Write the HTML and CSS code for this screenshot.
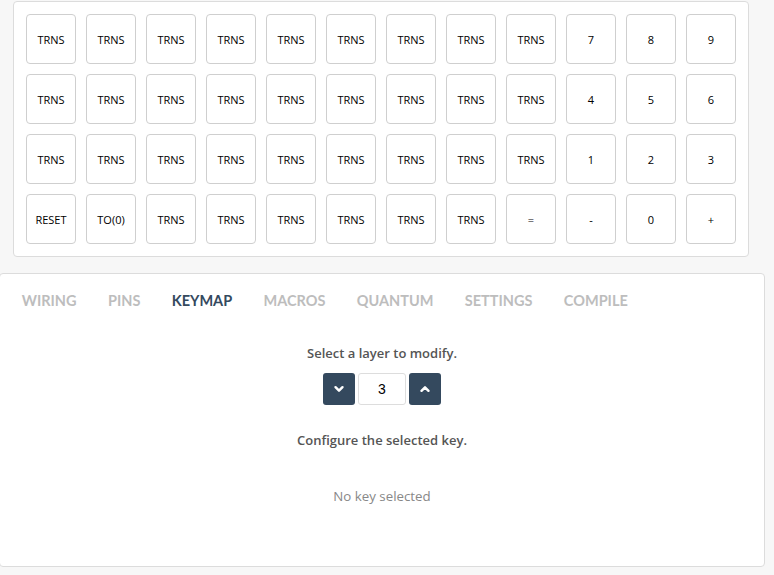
FILE: index.html
```html
<!DOCTYPE html>
<html>
<head>
<meta charset="utf-8">
<link rel="stylesheet" href="styles.css">
</head>
<body>
<div class="keyboard">
  <div class="keys">
    <div class="key">TRNS</div><div class="key">TRNS</div><div class="key">TRNS</div><div class="key">TRNS</div><div class="key">TRNS</div><div class="key">TRNS</div><div class="key">TRNS</div><div class="key">TRNS</div><div class="key">TRNS</div><div class="key">7</div><div class="key">8</div><div class="key">9</div>
    <div class="key">TRNS</div><div class="key">TRNS</div><div class="key">TRNS</div><div class="key">TRNS</div><div class="key">TRNS</div><div class="key">TRNS</div><div class="key">TRNS</div><div class="key">TRNS</div><div class="key">TRNS</div><div class="key">4</div><div class="key">5</div><div class="key">6</div>
    <div class="key">TRNS</div><div class="key">TRNS</div><div class="key">TRNS</div><div class="key">TRNS</div><div class="key">TRNS</div><div class="key">TRNS</div><div class="key">TRNS</div><div class="key">TRNS</div><div class="key">TRNS</div><div class="key">1</div><div class="key">2</div><div class="key">3</div>
    <div class="key">RESET</div><div class="key">TO(0)</div><div class="key">TRNS</div><div class="key">TRNS</div><div class="key">TRNS</div><div class="key">TRNS</div><div class="key">TRNS</div><div class="key">TRNS</div><div class="key">=</div><div class="key">-</div><div class="key">0</div><div class="key">+</div>
  </div>
</div>

<div class="panel">
  <div class="tabs">
    <div class="tab">Wiring</div>
    <div class="tab">Pins</div>
    <div class="tab active">Keymap</div>
    <div class="tab">Macros</div>
    <div class="tab">Quantum</div>
    <div class="tab">Settings</div>
    <div class="tab">Compile</div>
  </div>
  <div class="content">
    <div class="label">Select a layer to modify.</div>
    <div class="spinner">
      <button class="spin-btn"><svg width="12" height="12" viewBox="0 0 12 12"><path d="M2.5 4.2 L6 7.7 L9.5 4.2" fill="none" stroke="#fff" stroke-width="2.4" stroke-linecap="round" stroke-linejoin="round"/></svg></button>
      <div class="layer-input">3</div>
      <button class="spin-btn"><svg width="12" height="12" viewBox="0 0 12 12"><path d="M2.5 7.8 L6 4.3 L9.5 7.8" fill="none" stroke="#fff" stroke-width="2.4" stroke-linecap="round" stroke-linejoin="round"/></svg></button>
    </div>
    <div class="label configure">Configure the selected key.</div>
    <div class="none">No key selected</div>
  </div>
</div>
</body>
</html>
```

FILE: styles.css
```css
html, body {
  margin: 0;
  padding: 0;
  background: #f7f7f7;
  overflow: hidden;
}

body {
  font-family: "Open Sans", "Noto Sans", sans-serif;
}

.keyboard {
  margin: 1px 0 0 13px;
  width: 734px;
  background: #fff;
  border: 1px solid #dcdcdc;
  border-radius: 4px;
  box-sizing: content-box;
}

.keys {
  display: grid;
  grid-template-columns: repeat(12, 50px);
  grid-auto-rows: 50px;
  gap: 10px;
  padding: 12px;
}

.key {
  box-sizing: border-box;
  border: 1px solid #cfcfcf;
  border-radius: 4px;
  display: flex;
  align-items: center;
  justify-content: center;
  font-size: 11px;
  color: #000;
  background: #fff;
}

.panel {
  margin: 16px 0 0 -1px;
  width: 764px;
  height: 292px;
  background: #fff;
  border: 1px solid #dcdcdc;
  border-radius: 4px;
}

.tabs {
  display: flex;
  padding: 17px 0 0 6px;
}

.tab {
  font-family: Lato, sans-serif;
  font-weight: 700;
  font-size: 14.5px;
  line-height: 20px;
  text-transform: uppercase;
  color: #bdbdbd;
  padding: 0 15.7px;
}

.tab.active {
  color: #34495e;
}

.content {
  display: flex;
  flex-direction: column;
  align-items: center;
  padding-top: 33px;
}

.label {
  font-size: 13px;
  font-weight: 600;
  color: #555;
  line-height: 18px;
}

.spinner {
  display: flex;
  gap: 3px;
  margin-top: 11px;
}

.spin-btn {
  width: 32px;
  height: 32px;
  border: 0;
  border-radius: 3px;
  background: #34495e;
  padding: 0;
  display: flex;
  align-items: center;
  justify-content: center;
}

.layer-input {
  box-sizing: border-box;
  width: 48px;
  height: 32px;
  border: 1px solid #ddd;
  border-radius: 3px;
  display: flex;
  align-items: center;
  justify-content: center;
  font-family: "Liberation Sans", Arial, sans-serif;
  font-size: 14px;
  color: #000;
}

.configure {
  margin-top: 26px;
}

.none {
  margin-top: 38px;
  font-size: 13.3px;
  color: #888;
  line-height: 18px;
}
```
